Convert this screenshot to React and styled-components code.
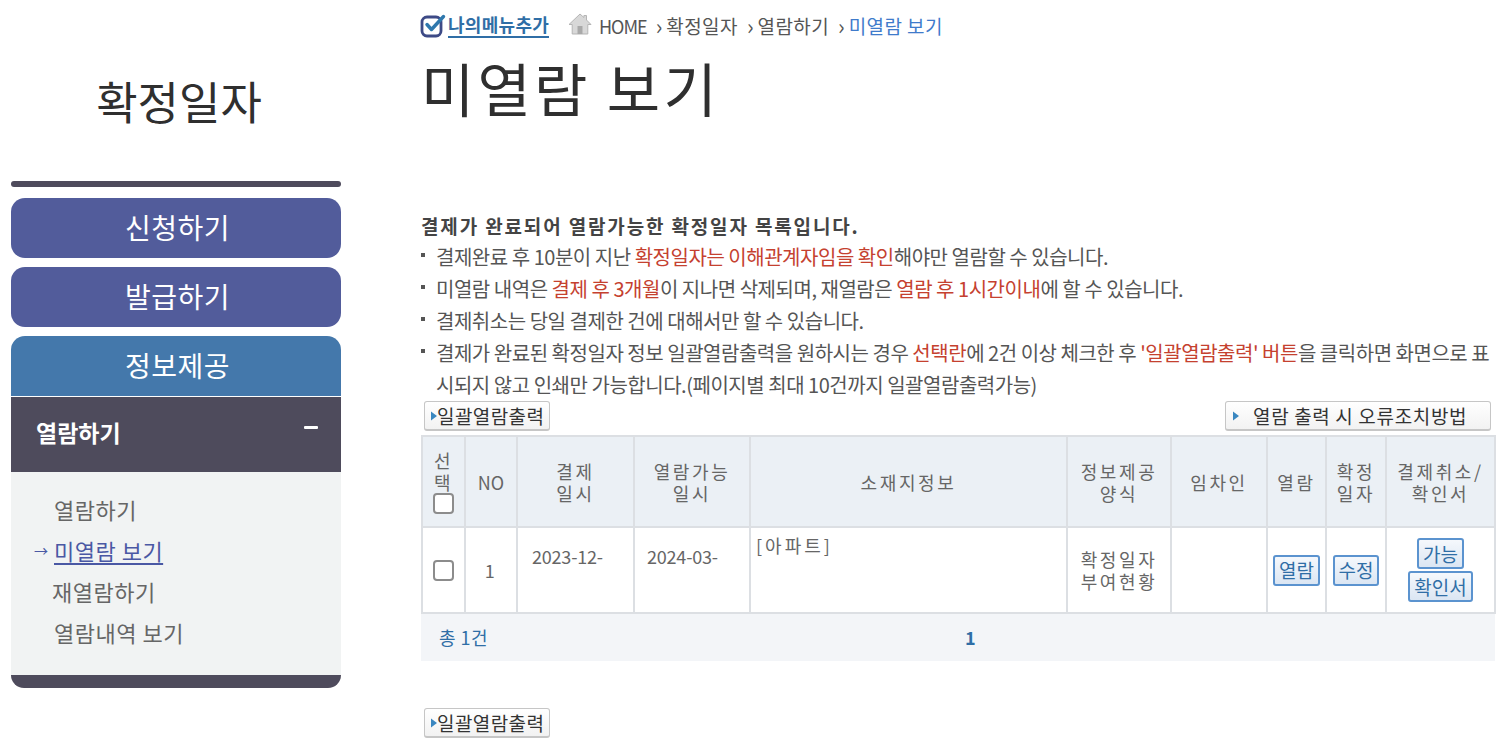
import React from "react";
import styled, { createGlobalStyle } from "styled-components";

const GlobalStyle = createGlobalStyle`
  html, body {
    margin: 0;
    padding: 0;
    background: #fff;
    font-family: "Noto Sans CJK KR", "Noto Sans", sans-serif;
    color: #444;
  }
`;

const subMenus = ["열람하기", "미열람 보기", "재열람하기", "열람내역 보기"];

const CheckLogo = () => (
  <svg width="26" height="26" viewBox="0 0 26 26" fill="none">
    <rect x="2" y="4" width="19" height="19" rx="5" stroke="#3d4a86" strokeWidth="2.8" />
    <path d="M7 11.5l4.5 5L23.5 3.5" stroke="#2f78ad" strokeWidth="3.4" strokeLinecap="round" strokeLinejoin="round" />
  </svg>
);

const HomeIcon = () => (
  <svg width="24" height="22" viewBox="0 0 24 22">
    <path d="M12 1L1 11.5h3.2V21h15.6v-9.5H23L18.5 7V2.5h-2.6v2z" fill="#d8d8d8" stroke="#b5b5b5" strokeWidth="1" />
    <rect x="9.5" y="13" width="5" height="8" fill="#a9a9a9" />
  </svg>
);

const Bullet = () => (
  <svg width="6" height="10" viewBox="0 0 6 10">
    <path d="M0 0.5L6 5l-6 4.5z" fill="#3a87c0" />
  </svg>
);

const Minus = () => (
  <svg width="14" height="4" viewBox="0 0 14 4">
    <rect width="14" height="3" rx="1" fill="#fff" />
  </svg>
);

const PrintButton = () => (
  <BulkButton>
    <Bullet />
    일괄열람출력
  </BulkButton>
);

const App = () => {
  return (
    <Page>
      <GlobalStyle />
      <Side>
        <SideTitle>확정일자</SideTitle>
        <SideBar />
        <MenuItem>신청하기</MenuItem>
        <MenuItem>발급하기</MenuItem>
        <ActiveItem>정보제공</ActiveItem>
        <SubHeader>
          열람하기
          <Minus />
        </SubHeader>
        <SubList>
          {subMenus.map((name, i) => (
            <SubItem key={name} $on={i === 1} $tight={i === 2}>
              {i === 1 && <SubArrow>→</SubArrow>}
              <span>{name}</span>
            </SubItem>
          ))}
        </SubList>
        <SideFoot />
      </Side>

      <Main>
        <Crumbs>
          <MyMenu>
            <CheckLogo />
            <MyMenuText>나의메뉴추가</MyMenuText>
          </MyMenu>
          <HomeIcon />
          <HomeCrumb>HOME</HomeCrumb>
          <Sep>›</Sep>
          <Crumb>확정일자</Crumb>
          <Sep>›</Sep>
          <Crumb>열람하기</Crumb>
          <Sep>›</Sep>
          <Crumb $now>미열람 보기</Crumb>
        </Crumbs>
        <PageTitle>미열람 보기</PageTitle>

        <Lead>결제가 완료되어 열람가능한 확정일자 목록입니다.</Lead>
        <Notes>
          <Note>
            결제완료 후 10분이 지난 <Red>확정일자는 이해관계자임을 확인</Red>해야만 열람할 수 있습니다.
          </Note>
          <Note>
            미열람 내역은 <Red>결제 후 3개월</Red>이 지나면 삭제되며, 재열람은 <Red>열람 후 1시간이내</Red>에 할 수 있습니다.
          </Note>
          <Note>결제취소는 당일 결제한 건에 대해서만 할 수 있습니다.</Note>
          <Note>
            결제가 완료된 확정일자 정보 일괄열람출력을 원하시는 경우 <Red>선택란</Red>에 2건 이상 체크한 후{" "}
            <Red>'일괄열람출력' 버튼</Red>을 클릭하면 화면으로 표시되지 않고 인쇄만 가능합니다.(페이지별 최대 10건까지 일괄열람출력가능)
          </Note>
        </Notes>

        <ButtonRow>
          <PrintButton />
          <HelpButton>
            <Bullet />
            열람 출력 시 오류조치방법
          </HelpButton>
        </ButtonRow>

        <Table>
          <colgroup>
            <col width="43" />
            <col width="52" />
            <col width="117" />
            <col width="116" />
            <col width="317" />
            <col width="104" />
            <col width="96" />
            <col width="59" />
            <col width="60" />
            <col width="109" />
          </colgroup>
          <thead>
            <tr>
              <Th>
                선
                <br />
                택
                <Check />
              </Th>
              <NoTh>NO</NoTh>
              <Th>
                결제
                <br />
                일시
              </Th>
              <Th>
                열람가능
                <br />
                일시
              </Th>
              <Th>소재지정보</Th>
              <Th>
                정보제공
                <br />
                양식
              </Th>
              <Th>임차인</Th>
              <Th>열람</Th>
              <Th>
                확정
                <br />
                일자
              </Th>
              <Th>
                결제취소/
                <br />
                확인서
              </Th>
            </tr>
          </thead>
          <tbody>
            <tr>
              <Td>
                <Check />
              </Td>
              <Td>1</Td>
              <DateTd $pad={14}>2023-12-</DateTd>
              <DateTd $pad={12}>2024-03-</DateTd>
              <AddressTd>[아파트]</AddressTd>
              <Td>
                확정일자
                <br />
                부여현황
              </Td>
              <Td />
              <Td>
                <SmallButton>열람</SmallButton>
              </Td>
              <Td>
                <SmallButton>수정</SmallButton>
              </Td>
              <Td>
                <SmallButton>가능</SmallButton>
                <SmallButton>확인서</SmallButton>
              </Td>
            </tr>
          </tbody>
        </Table>

        <Paging>
          <Total>총 1건</Total>
          <PageNum>1</PageNum>
        </Paging>

        <BottomRow>
          <PrintButton />
        </BottomRow>
      </Main>
    </Page>
  );
};

const Page = styled.div`
  display: flex;
  width: 1505px;
  height: 754px;
  overflow: hidden;
`;
const Side = styled.aside`
  width: 330px;
  margin-left: 11px;
  flex-shrink: 0;
  display: flex;
  flex-direction: column;
`;
const SideTitle = styled.h2`
  margin: 0;
  height: 181px;
  padding-left: 6px;
  line-height: 201px;
  text-align: center;
  font-size: 45px;
  font-weight: 400;
  color: #2f2f2f;
  letter-spacing: 0;
`;
const SideBar = styled.div`
  height: 6px;
  border-radius: 3px;
  background: #4e4b5c;
  margin-bottom: 11px;
`;
const MenuItem = styled.div`
  height: 60px;
  padding-left: 3px;
  line-height: 58px;
  margin-bottom: 9px;
  border-radius: 14px;
  background: #525c9b;
  color: #fff;
  font-size: 28px;
  letter-spacing: 0.5px;
  text-align: center;
`;
const ActiveItem = styled(MenuItem)`
  margin-bottom: 1px;
  border-radius: 14px 14px 0 0;
  background: #4478ab;
`;
const SubHeader = styled.div`
  height: 75px;
  padding: 0 23px 5px 25px;
  box-sizing: border-box;
  display: flex;
  align-items: center;
  justify-content: space-between;
  background: #4e4b5c;
  color: #fff;
  font-size: 23px;
  font-weight: 700;
  svg {
    margin-top: -8px;
  }
`;
const SubList = styled.ul`
  list-style: none;
  margin: 0;
  height: 203px;
  padding: 17px 0 0 43px;
  box-sizing: border-box;
  background: #f1f3f3;
`;
const SubItem = styled.li`
  position: relative;
  height: 41px;
  line-height: 41px;
  font-size: 22px;
  letter-spacing: 0.5px;
  color: ${(p) => (p.$on ? "#4a58a4" : "#666")};
  margin-left: ${(p) => (p.$tight ? "-2px" : "0")};
  span {
    text-decoration: ${(p) => (p.$on ? "underline" : "none")};
    text-underline-offset: 3px;
  }
`;
const SubArrow = styled.i`
  position: absolute;
  left: -20px;
  top: 0;
  font-style: normal;
  font-size: 14px;
`;
const SideFoot = styled.div`
  height: 13px;
  background: #4e4b5c;
  border-radius: 0 0 14px 14px;
`;
const Main = styled.main`
  width: 1074px;
  margin-left: 80px;
  flex-shrink: 0;
  display: flex;
  flex-direction: column;
`;
const Crumbs = styled.nav`
  height: 53px;
  box-sizing: border-box;
  padding-top: 12px;
  display: flex;
  align-items: flex-start;
  font-size: 18px;
  color: #555;
  line-height: 28px;
  svg {
    flex-shrink: 0;
    margin-top: 1px;
  }
`;
const MyMenu = styled.div`
  display: flex;
  align-items: flex-start;
  width: 147px;
  margin-left: -1px;
  margin-right: 1px;
`;
const MyMenuText = styled.span`
  color: #2f6ea6;
  font-size: 18px;
  font-weight: 700;
  letter-spacing: 0.3px;
  border-bottom: 2px solid #2f6ea6;
  line-height: 24px;
  margin-left: 2px;
  white-space: nowrap;
`;
const Crumb = styled.span`
  margin-left: 4px;
  font-size: 19px;
  letter-spacing: 0.4px;
  color: ${(p) => (p.$now ? "#3f7bcb" : "#555")};
`;
const HomeCrumb = styled(Crumb)`
  margin-left: 7px;
  font-size: 18px;
  letter-spacing: -1px;
`;
const Sep = styled.span`
  margin-left: 9px;
  color: #555;
  font-size: 22px;
  line-height: 26px;
`;
const PageTitle = styled.h1`
  margin: 0;
  height: 161px;
  line-height: 68px;
  font-size: 58px;
  font-weight: 400;
  color: #2f2f2f;
  letter-spacing: 3.2px;
`;
const Lead = styled.p`
  margin: 0;
  height: 27px;
  line-height: 24px;
  font-size: 19px;
  font-weight: 700;
  letter-spacing: 1.85px;
  color: #444;
`;
const Notes = styled.ul`
  list-style: none;
  margin: 0;
  padding: 0;
`;
const Note = styled.li`
  position: relative;
  padding-left: 15px;
  line-height: 32px;
  font-size: 20px;
  letter-spacing: -0.47px;
  color: #555;
  word-break: break-all;
  &::before {
    content: "";
    position: absolute;
    left: 0;
    top: 12px;
    width: 4px;
    height: 4px;
    background: #555;
  }
`;
const Red = styled.span`
  color: #c5412f;
`;
const ButtonRow = styled.div`
  display: flex;
  justify-content: space-between;
  padding: 0 4px 0 3px;
  margin: 0 0 4px;
`;
const BottomRow = styled.div`
  display: flex;
  padding-left: 3px;
  margin-top: 47px;
`;
const BulkButton = styled.button`
  width: 126px;
  height: 30px;
  padding: 0 0 0 6px;
  display: flex;
  align-items: center;
  font-family: inherit;
  font-size: 19px;
  letter-spacing: 0.4px;
  color: #333;
  white-space: nowrap;
  border: 1px solid #c6c6c6;
  border-bottom-width: 2px;
  border-radius: 3px;
  background: linear-gradient(#fff, #f2f2f2);
`;
const HelpButton = styled(BulkButton)`
  width: 266px;
  padding-left: 7px;
  letter-spacing: 0.65px;
  svg {
    margin-right: 14px;
  }
`;
const Table = styled.table`
  width: 1073px;
  table-layout: fixed;
  border-collapse: collapse;
  border: 2px solid #dcdfe3;
  text-align: center;
  font-size: 18px;
  color: #666;
`;
const Th = styled.th`
  height: 89px;
  padding: 0;
  font-weight: 400;
  line-height: 22px;
  letter-spacing: 2.6px;
  background: #ebf0f5;
  border: 2px solid #dcdfe3;
`;
const NoTh = styled(Th)`
  letter-spacing: 0;
`;
const Td = styled.td`
  height: 84px;
  padding: 0;
  line-height: 22px;
  letter-spacing: 2.6px;
  border: 2px solid #dcdfe3;
`;
const DateTd = styled(Td)`
  height: 67px;
  padding: 17px 0 0 ${(p) => p.$pad}px;
  vertical-align: top;
  text-align: left;
  letter-spacing: -0.2px;
`;
const AddressTd = styled(Td)`
  height: 78px;
  padding: 6px 0 0 5px;
  vertical-align: top;
  text-align: left;
  letter-spacing: 3px;
`;
const Check = styled.input.attrs({ type: "checkbox" })`
  display: block;
  width: 21px;
  height: 21px;
  margin: 0 auto;
  appearance: none;
  background: #fff;
  border: 2px solid #8c8c8c;
  border-radius: 4px;
`;
const SmallButton = styled.button`
  display: block;
  margin: 2px auto;
  padding: 0 4px;
  height: 31px;
  font-family: inherit;
  font-size: 19px;
  line-height: 26px;
  color: #2f6ea6;
  border: 2px solid #5b93cf;
  border-radius: 3px;
  background: linear-gradient(#f5f8fc, #dbe6f3);
`;
const Paging = styled.div`
  position: relative;
  height: 47px;
  padding-left: 18px;
  line-height: 47px;
  font-size: 18px;
  background: #f3f5f8;
  color: #2f6ea6;
`;
const Total = styled.span`
  letter-spacing: 0.5px;
`;
const PageNum = styled.b`
  position: absolute;
  left: 544px;
  top: 0;
`;

export default App;
